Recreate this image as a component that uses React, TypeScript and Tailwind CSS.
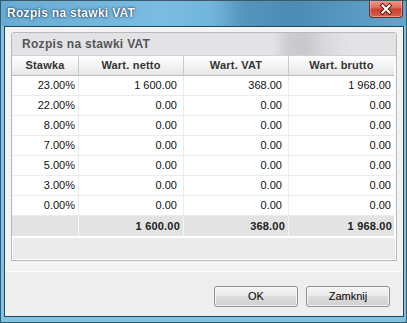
import React from "react";

const rows: string[][] = [
  ["23.00%", "1 600.00", "368.00", "1 968.00"],
  ["22.00%", "0.00", "0.00", "0.00"],
  ["8.00%", "0.00", "0.00", "0.00"],
  ["7.00%", "0.00", "0.00", "0.00"],
  ["5.00%", "0.00", "0.00", "0.00"],
  ["3.00%", "0.00", "0.00", "0.00"],
  ["0.00%", "0.00", "0.00", "0.00"],
];

const headers = ["Stawka", "Wart. netto", "Wart. VAT", "Wart. brutto"];

function CloseButton() {
  return (
    <div className="absolute -top-px right-[3px] w-[34px] h-[18px] rounded-b-[4px] border border-t-0 border-[#7a2a22] bg-[linear-gradient(to_bottom,#f0a191_0%,#e06a58_45%,#c7402e_55%,#d9614d_100%)] flex items-center justify-center shadow-[inset_0_0_0_1px_rgba(255,255,255,0.35)]">
      <svg width="14" height="12" viewBox="0 0 14 12">
        <path d="M3.5 2.5 L10.5 9.5 M10.5 2.5 L3.5 9.5" stroke="#5a1a12" strokeWidth="4" strokeLinecap="square" />
        <path d="M3.5 2.5 L10.5 9.5 M10.5 2.5 L3.5 9.5" stroke="#ffffff" strokeWidth="2" strokeLinecap="square" />
      </svg>
    </div>
  );
}

export default function App() {
  return (
    <div className="w-[407px] h-[323px] relative overflow-hidden border border-[#3a5a68] bg-[#7fc2e4] flex flex-col font-['Liberation_Sans',Arial,sans-serif] text-[11px] text-[#111]">
      <div className="h-[25px] shrink-0 flex items-center pl-[6px] pb-[2px] bg-[linear-gradient(to_right,#68acd4_0%,#7abde1_40%,#72b5dc_52%,#5595bd_60%,#4c8bb3_72%,#5597bf_85%,#62a6cd_100%)]">
        <span className="text-white font-bold text-[12px] tracking-[0.3px] [text-shadow:0_0_3px_rgba(0,30,60,0.8),0_0_1px_rgba(0,30,60,0.9)]">
          Rozpis na stawki VAT
        </span>
      </div>
      <CloseButton />
      <div className="flex-1 ml-[3px] mr-[2px] mb-[5px] border border-[#1e4a58] bg-[#eeeeee] flex flex-col">
        <div className="pt-[5px] px-[6px] pb-[10px] bg-[#f3f3f3] border-b border-[#fdfdfd]">
          <div className="h-[229px] border border-[#b9b9bd] rounded-t-[3px] bg-white flex flex-col">
            <div className="h-[23px] shrink-0 flex items-center pl-[10px] rounded-t-[3px] bg-[linear-gradient(to_right,#e3e3e6_0%,#e3e3e6_68%,#cdcdd1_72%,#c8c8cc_76%,#dadadd_82%,#e3e3e6_88%,#e3e3e6_100%)] border-b border-[#d0d0d4]">
              <span className="font-bold text-[12px] tracking-[0.3px] text-[#555555]">Rozpis na stawki VAT</span>
            </div>
            <div className="grid grid-cols-[67px_105px_105px_105px]">
              {headers.map((h, i) => (
                <div
                  key={h}
                  className={`h-[20px] flex items-center justify-center font-bold tracking-[0.2px] text-[#333] bg-[linear-gradient(to_bottom,#ffffff_0%,#f4f4f4_50%,#e6e6e6_100%)] border-b border-[#bdbdbd] ${i < 3 ? "border-r border-r-[#cacaca]" : ""}`}
                >
                  {h}
                </div>
              ))}
              {rows.map((r, ri) =>
                r.map((c, ci) => (
                  <div
                    key={`${ri}-${ci}`}
                    className={`h-[20px] flex items-center justify-end border-b border-[#ececec] ${ci < 3 ? "border-r border-r-[#ececec]" : ""} ${ci === 0 ? "pr-[3px]" : ci === 3 ? "pr-[3px]" : "pr-[6px]"}`}
                  >
                    {c}
                  </div>
                ))
              )}
              {["", "1 600.00", "368.00", "1 968.00"].map((c, ci) => (
                <div
                  key={`t-${ci}`}
                  className={`h-[20px] flex items-center justify-end font-bold tracking-[0.2px] text-[#222] bg-[#e3e3e3] ${ci < 3 ? "border-r border-r-[#f6f6f6]" : ""} ${ci === 3 ? "pr-[2px]" : "pr-[3px]"}`}
                >
                  {c}
                </div>
              ))}
            </div>
            <div className="flex-1 border-t-2 border-white px-px pb-px">
              <div className="h-full bg-[#ebebeb]" />
            </div>
          </div>
        </div>
        <div className="flex-1 flex items-center justify-end gap-[8px] pr-[13px] pt-[4px]">
          <button className="w-[84px] h-[21px] rounded-[3px] border border-[#8e8f8f] bg-[linear-gradient(to_bottom,#f4f4f4_0%,#ebebeb_45%,#dddddd_50%,#cfcfcf_100%)] shadow-[inset_0_0_0_1px_rgba(255,255,255,0.7)] text-[11px] text-black">
            OK
          </button>
          <button className="w-[84px] h-[21px] rounded-[3px] border border-[#8e8f8f] bg-[linear-gradient(to_bottom,#f4f4f4_0%,#ebebeb_45%,#dddddd_50%,#cfcfcf_100%)] shadow-[inset_0_0_0_1px_rgba(255,255,255,0.7)] text-[11px] text-black">
            Zamknij
          </button>
        </div>
      </div>
    </div>
  );
}
